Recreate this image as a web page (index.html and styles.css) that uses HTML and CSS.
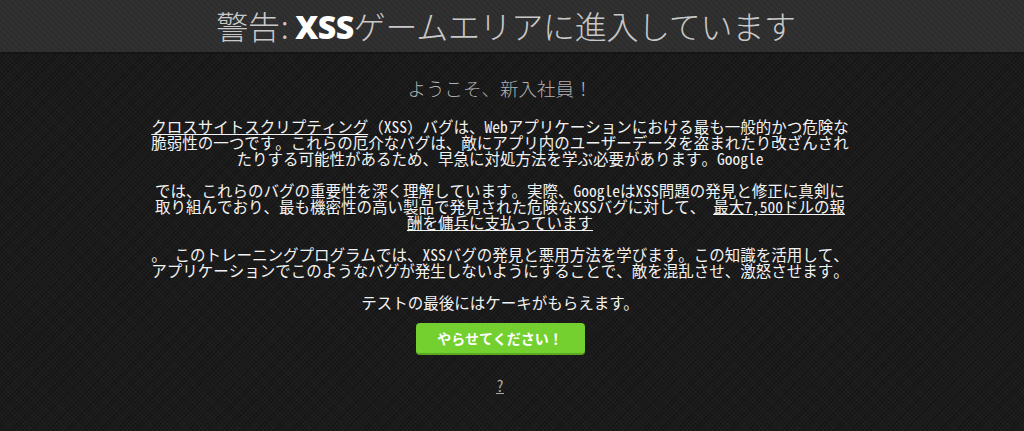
FILE: index.html
```html
<!DOCTYPE html>
<html lang="ja">
<head>
<meta charset="UTF-8" />
<meta name="viewport" content="width=device-width, initial-scale=1" />
<title>XSSゲーム</title>
<link rel="stylesheet" href="styles.css">
</head>
<body>

<header class="top">
  <h1 class="title">警告<span class="colon">:</span> <b class="xss">XSS</b>ゲームエリアに進入しています</h1>
</header>

<main class="intro">
  <p class="welcome">ようこそ、新入社員！</p>

  <p class="text">
    <a href="#">クロスサイトスクリプティング</a>（XSS）バグは、Webアプリケーションにおける最も一般的かつ危険な<br>
    脆弱性の一つです。これらの厄介なバグは、敵にアプリ内のユーザーデータを盗まれたり改ざんされ<br>
    たりする可能性があるため、早急に対処方法を学ぶ必要があります。Google
  </p>

  <p class="text">
    では、これらのバグの重要性を深く理解しています。実際、GoogleはXSS問題の発見と修正に真剣に<br>
    取り組んでおり、最も機密性の高い製品で発見された危険なXSSバグに対して、 <a href="#">最大7,500ドルの報<br>
    酬を傭兵に支払っています</a>
  </p>

  <p class="text">
    。 このトレーニングプログラムでは、XSSバグの発見と悪用方法を学びます。この知識を活用して、<br>
    アプリケーションでこのようなバグが発生しないようにすることで、敵を混乱させ、激怒させます。
  </p>

  <p class="text cake">テストの最後にはケーキがもらえます。</p>

  <button class="go">やらせてください！</button>

  <p class="help"><a href="#">?</a></p>
</main>

</body>
</html>
```

FILE: styles.css
```css
html, body {
  margin: 0;
  height: 100%;
}
body {
  background-color: #1b1b1b;
  background-image:
    repeating-linear-gradient(45deg, rgba(255,255,255,0.02) 0 1px, transparent 1px 3px),
    repeating-linear-gradient(-45deg, rgba(0,0,0,0.25) 0 1px, transparent 1px 3px);
  color: #f2f2f2;
  font-family: "Noto Sans Mono CJK JP", "Noto Sans CJK JP", sans-serif;
  overflow: hidden;
}
.top {
  height: 52px;
  display: flex;
  align-items: center;
  justify-content: center;
  padding-right: 12px;
  background-color: #2d2d2d;
  background-image: repeating-linear-gradient(45deg, rgba(255,255,255,0.02) 0 2px, transparent 2px 4px);
  border-bottom: 2px solid #151515;
}
.title {
  margin: 0;
  font-family: "Noto Sans CJK JP", sans-serif;
  font-weight: 300;
  font-size: 32px;
  line-height: 40px;
  color: #c8c8c8;
  letter-spacing: -0.3px;
}
.colon {
  margin-left: 1px;
}
.xss {
  font-family: "Open Sans", "Noto Sans", sans-serif;
  font-weight: 800;
  color: #ffffff;
  letter-spacing: -0.5px;
}
.intro {
  width: 1000px;
  text-align: center;
  padding-top: 22px;
}
.welcome {
  margin: 0 0 18px;
  font-family: "Noto Sans CJK JP", sans-serif;
  font-weight: 300;
  font-size: 18.5px;
  line-height: 24px;
  color: #b0b0b0;
}
.text {
  margin: 0 0 16px;
  font-size: 15.5px;
  line-height: 16px;
  white-space: nowrap;
}
.text a, .help a {
  color: inherit;
  text-decoration: underline;
}
.cake {
  margin-top: 10px;
  margin-bottom: 13px;
  font-family: "Noto Sans CJK JP", sans-serif;
}
.go {
  width: 169px;
  height: 32px;
  background: #74d02f;
  border: none;
  border-bottom: 2px solid #5aa81f;
  border-radius: 4px;
  color: #ffffff;
  font-family: "Noto Sans CJK JP", sans-serif;
  font-weight: 700;
  font-size: 14px;
  cursor: pointer;
}
.help {
  margin: 20px 0 0;
  font-size: 16px;
  line-height: 20px;
}
.help a {
  color: #a8a8a8;
}
```
